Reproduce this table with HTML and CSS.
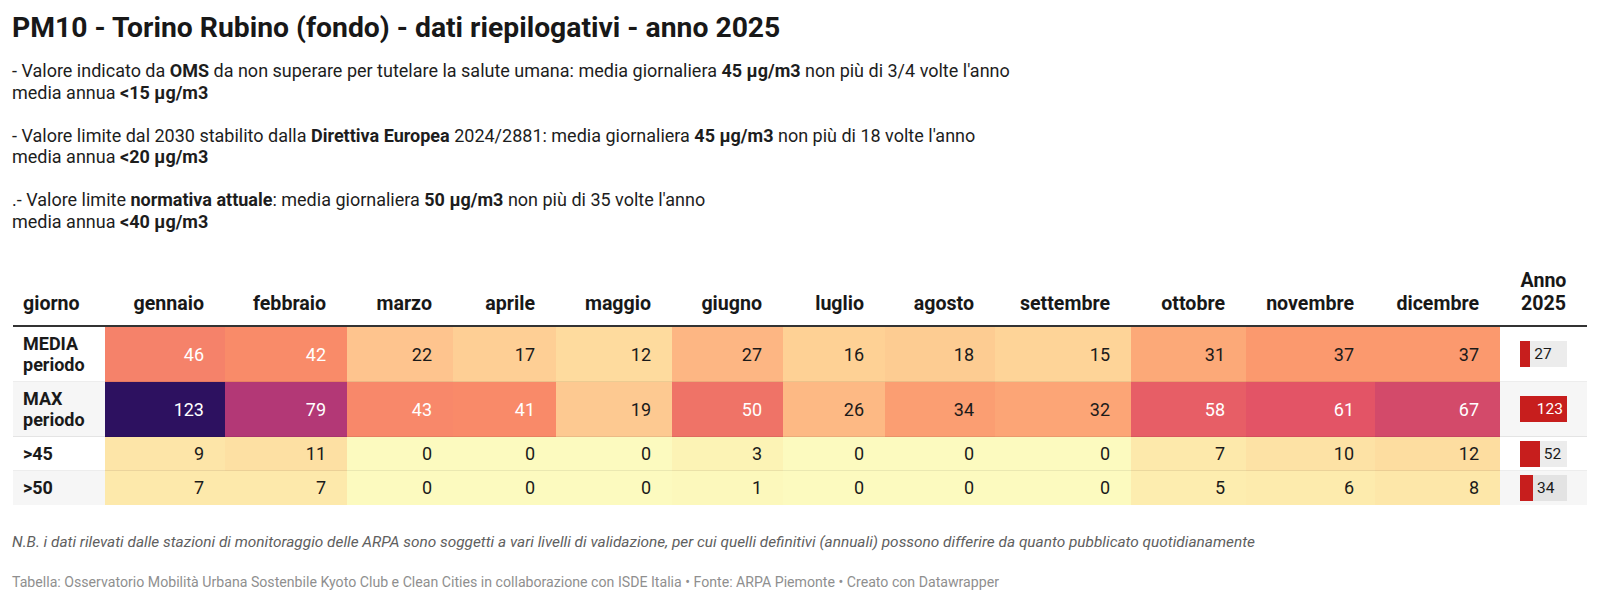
FILE: index.html
```html
<!DOCTYPE html>
<html lang="it">
<head>
<meta charset="utf-8">
<title>PM10 - Torino Rubino (fondo)</title>
<link rel="stylesheet" href="styles.css">
</head>
<body>
<div class="chart">
  <h1 class="title">PM10 - Torino Rubino (fondo) - dati riepilogativi - anno 2025</h1>
  <div class="desc">
    <p>- Valore indicato da <b>OMS</b> da non superare per tutelare la salute umana: media giornaliera <b>45 µg/m3</b> non più di 3/4 volte l'anno<br>media annua <b>&lt;15 µg/m3</b></p>
    <p>- Valore limite dal 2030 stabilito dalla <b>Direttiva Europea</b> 2024/2881: media giornaliera <b>45 µg/m3</b> non più di 18 volte l'anno<br>media annua <b>&lt;20 µg/m3</b></p>
    <p>.- Valore limite <b>normativa attuale</b>: media giornaliera <b>50 µg/m3</b> non più di 35 volte l'anno<br>media annua <b>&lt;40 µg/m3</b></p>
  </div>

  <table class="tbl">
    <colgroup>
      <col class="w-label"><col class="w-gen"><col class="w-feb"><col class="w-mar"><col class="w-apr"><col class="w-mag"><col class="w-giu"><col class="w-lug"><col class="w-ago"><col class="w-set"><col class="w-ott"><col class="w-nov"><col class="w-dic"><col class="w-anno">
    </colgroup>
    <thead>
      <tr>
        <th class="lbl">giorno</th>
        <th>gennaio</th><th>febbraio</th><th>marzo</th><th>aprile</th><th>maggio</th><th>giugno</th><th>luglio</th><th>agosto</th><th>settembre</th><th>ottobre</th><th>novembre</th><th>dicembre</th>
        <th class="anno">Anno<br>2025</th>
      </tr>
    </thead>
    <tbody>
      <tr>
        <td class="lbl">MEDIA<br>periodo</td>
        <td class="lt" style="background:#f5826a">46</td>
        <td class="lt" style="background:#f98b69">42</td>
        <td style="background:#fec48e">22</td>
        <td style="background:#fecf95">17</td>
        <td style="background:#fedb9e">12</td>
        <td style="background:#fdb683">27</td>
        <td style="background:#fed195">16</td>
        <td style="background:#fdcc92">18</td>
        <td style="background:#fed498">15</td>
        <td style="background:#fca978">31</td>
        <td style="background:#fb996e">37</td>
        <td style="background:#fb996e">37</td>
        <td class="anno"><div class="track"><div class="fill" style="width:21.95%"></div><span class="blab">27</span></div></td>
      </tr>
      <tr class="alt">
        <td class="lbl">MAX<br>periodo</td>
        <td class="lt" style="background:#2d1160">123</td>
        <td class="lt" style="background:#b33876">79</td>
        <td class="lt" style="background:#f8886a">43</td>
        <td class="lt" style="background:#f98a69">41</td>
        <td style="background:#fdc991">19</td>
        <td class="lt" style="background:#ef7367">50</td>
        <td style="background:#fdb984">26</td>
        <td style="background:#fb9e72">34</td>
        <td style="background:#fca576">32</td>
        <td class="lt" style="background:#e75e66">58</td>
        <td class="lt" style="background:#e35466">61</td>
        <td class="lt" style="background:#d34a6a">67</td>
        <td class="anno"><div class="track"><div class="fill" style="width:100%"><span class="blab in">123</span></div></div></td>
      </tr>
      <tr>
        <td class="lbl">&gt;45</td>
        <td style="background:#fde5a8">9</td>
        <td style="background:#fde0a3">11</td>
        <td style="background:#fcfabf">0</td>
        <td style="background:#fcfabf">0</td>
        <td style="background:#fcfabf">0</td>
        <td style="background:#fcf3b5">3</td>
        <td style="background:#fcfabf">0</td>
        <td style="background:#fcfabf">0</td>
        <td style="background:#fcfabf">0</td>
        <td style="background:#fde9ab">7</td>
        <td style="background:#fde2a5">10</td>
        <td style="background:#fddda0">12</td>
        <td class="anno"><div class="track"><div class="fill" style="width:42.28%"></div><span class="blab">52</span></div></td>
      </tr>
      <tr class="alt">
        <td class="lbl">&gt;50</td>
        <td style="background:#fde9ab">7</td>
        <td style="background:#fde9ab">7</td>
        <td style="background:#fcfabf">0</td>
        <td style="background:#fcfabf">0</td>
        <td style="background:#fcfabf">0</td>
        <td style="background:#fcf8bc">1</td>
        <td style="background:#fcfabf">0</td>
        <td style="background:#fcfabf">0</td>
        <td style="background:#fcfabf">0</td>
        <td style="background:#fdedaf">5</td>
        <td style="background:#fdebad">6</td>
        <td style="background:#fde7a9">8</td>
        <td class="anno"><div class="track"><div class="fill" style="width:27.64%"></div><span class="blab">34</span></div></td>
      </tr>
    </tbody>
  </table>

  <p class="note">N.B. i dati rilevati dalle stazioni di monitoraggio delle ARPA sono soggetti a vari livelli di validazione, per cui quelli definitivi (annuali) possono differire da quanto pubblicato quotidianamente</p>
  <p class="footer">Tabella: Osservatorio Mobilità Urbana Sostenbile Kyoto Club e Clean Cities in collaborazione con ISDE Italia • Fonte: ARPA Piemonte • Creato con Datawrapper</p>
</div>
</body>
</html>
```

FILE: styles.css
```css
html, body {
  margin: 0;
  padding: 0;
  background: #ffffff;
}

body {
  font-family: Roboto, "Liberation Sans", Arial, sans-serif;
  color: #1d1d1d;
}

.chart {
  padding: 12px 13px 0 12px;
}

.title {
  margin: 0;
  font-size: 28.3px;
  line-height: 31px;
  font-weight: 700;
  color: #181818;
}

.desc {
  margin-top: 17px;
  font-size: 18px;
  line-height: 21.5px;
  color: #1d1d1d;
}

.desc p {
  margin: 0 0 21.5px 0;
}

.desc p:last-child {
  margin-bottom: 0;
}

.desc b {
  font-weight: 700;
}

/* table */
.tbl {
  margin-top: 31px;
  margin-left: 1px;
  border-collapse: collapse;
  table-layout: fixed;
  width: 1574px;
}

.w-label { width: 92px; }
.w-gen { width: 120px; }
.w-feb { width: 122px; }
.w-mar { width: 106px; }
.w-apr { width: 103px; }
.w-mag { width: 116px; }
.w-giu { width: 111px; }
.w-lug { width: 102px; }
.w-ago { width: 110px; }
.w-set { width: 136px; }
.w-ott { width: 115px; }
.w-nov { width: 129px; }
.w-dic { width: 125px; }
.w-anno { width: 87px; }

.tbl th {
  font-size: 19.6px;
  line-height: 23px;
  font-weight: 700;
  color: #181818;
  text-align: right;
  vertical-align: bottom;
  padding: 6px 21px 10px 10px;
  border-bottom: 2px solid #333333;
  white-space: nowrap;
}

.tbl th.lbl {
  text-align: left;
}

.tbl th.anno {
  text-align: center;
  padding-left: 0;
  padding-right: 0;
}

.tbl td {
  font-size: 18px;
  line-height: 21px;
  color: #1a1a1a;
  text-align: right;
  vertical-align: middle;
  padding: 6px 21px 6px 10px;
  border-bottom: 1px solid rgba(0, 0, 0, 0.07);
}

.tbl tbody tr:last-child td {
  border-bottom-color: transparent;
}

.tbl td.lbl {
  text-align: left;
  font-weight: 700;
  color: #1a1a1a;
}

.tbl td.lt {
  color: #ffffff;
}

.tbl tr.alt td.lbl,
.tbl tr.alt td.anno {
  background: #f6f6f6;
}

.tbl td.anno {
  padding: 0 20px;
  text-align: left;
}

.track {
  display: flex;
  align-items: center;
  width: 47px;
  height: 26px;
  background: rgba(0, 0, 0, 0.075);
}

.fill {
  height: 100%;
  background: #c71e1d;
  flex: none;
  display: flex;
  align-items: center;
  justify-content: flex-end;
}

.blab {
  font-size: 15.5px;
  line-height: 26px;
  color: #1a1a1a;
  padding-left: 4px;
}

.blab.in {
  color: #ffffff;
  padding-left: 0;
  padding-right: 4px;
}

.note {
  margin: 27px 0 0 0;
  font-size: 15.4px;
  line-height: 20px;
  font-style: italic;
  color: #606060;
}

.footer {
  margin: 20px 0 0 0;
  font-size: 14.15px;
  line-height: 20px;
  color: #8f8f8f;
}
```
